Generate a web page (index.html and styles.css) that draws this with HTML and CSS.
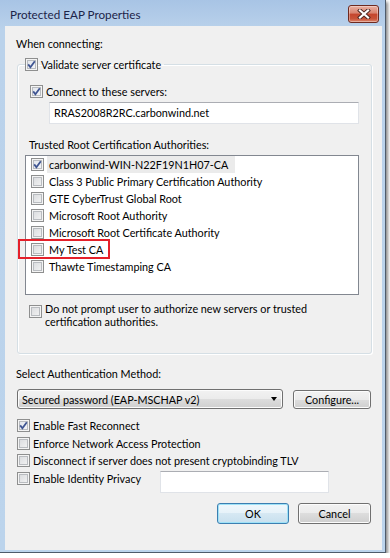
FILE: index.html
```html
<!DOCTYPE html>
<html lang="en">
<head>
    <meta charset="UTF-8">
    <title>Protected EAP Properties</title>
    <link rel="stylesheet" href="styles.css">
</head>
<body>
    <div class="window">
        <div class="titlebar">
            <span class="title">Protected EAP Properties</span>
            <span class="close">
                <svg width="14" height="10" viewBox="0 0 14 10">
                    <path d="M3 1.5 L11 8.5 M11 1.5 L3 8.5" stroke="#4a2520" stroke-width="4" stroke-linecap="square"/>
                    <path d="M3 1.5 L11 8.5 M11 1.5 L3 8.5" stroke="#fff" stroke-width="2.2" stroke-linecap="square"/>
                </svg>
            </span>
        </div>
        <div class="client">
            <p class="label">When connecting:</p>
            <fieldset class="group">
                <legend class="check"><span class="cb checked"></span>Validate server certificate</legend>
                <div class="check servers"><span class="cb checked"></span>Connect to these servers:</div>
                <div class="textbox servers-box">RRAS2008R2RC.carbonwind.net</div>
                <p class="label trusted">Trusted Root Certification Authorities:</p>
                <div class="listbox">
                    <div class="item"><span class="cb checked"></span><span class="name selected">carbonwind-WIN-N22F19N1H07-CA</span></div>
                    <div class="item"><span class="cb"></span><span class="name">Class 3 Public Primary Certification Authority</span></div>
                    <div class="item"><span class="cb"></span><span class="name">GTE CyberTrust Global Root</span></div>
                    <div class="item"><span class="cb"></span><span class="name">Microsoft Root Authority</span></div>
                    <div class="item"><span class="cb"></span><span class="name">Microsoft Root Certificate Authority</span></div>
                    <div class="item marked"><span class="cb"></span><span class="name">My Test CA</span><span class="callout"></span></div>
                    <div class="item"><span class="cb"></span><span class="name">Thawte Timestamping CA</span></div>
                </div>
                <div class="check prompt"><span class="cb"></span><span>Do not prompt user to authorize new servers or trusted certification authorities.</span></div>
            </fieldset>
            <p class="label method">Select Authentication Method:</p>
            <div class="method-row">
                <div class="combo">Secured password (EAP-MSCHAP v2)<span class="arrow"></span></div>
                <div class="button configure">Configure...</div>
            </div>
            <div class="options">
                <div class="check"><span class="cb checked"></span>Enable Fast Reconnect</div>
                <div class="check"><span class="cb"></span>Enforce Network Access Protection</div>
                <div class="check"><span class="cb"></span>Disconnect if server does not present cryptobinding TLV</div>
                <div class="privacy">
                    <div class="check"><span class="cb"></span>Enable Identity Privacy</div>
                    <div class="textbox privacy-box"></div>
                </div>
            </div>
            <div class="actions">
                <div class="button default">OK</div>
                <div class="button">Cancel</div>
            </div>
        </div>
    </div>
    <script>
        // draw the tick inside every checked box
        document.querySelectorAll(".cb.checked").forEach(function (cb) {
            cb.innerHTML = '<svg width="11" height="11" viewBox="0 0 11 11"><path d="M2.2 5.4 L4.4 8.2 L8.8 2.2" fill="none" stroke="#3f5592" stroke-width="1.8"/></svg>';
        });
    </script>
</body>
</html>
```

FILE: styles.css
```css
* {
    margin: 0;
    box-sizing: border-box;
}
body {
    margin: 0;
    background: #fff;
    font-family: Lato, "Noto Sans", sans-serif;
    font-size: 10.8px;
    color: #000;
}

.window {
    width: 386px;
    height: 553px;
    display: flex;
    flex-direction: column;
    background: linear-gradient(#a8c4e5, #bad2eb 30px, #bcd4ec);
    border-right: 1px solid #4e5b6b;
    border-bottom: 1px solid #4e5b6b;
    box-shadow: 2px 2px 3px rgba(0, 0, 0, 0.45);
}
.titlebar {
    height: 26px;
    display: flex;
    justify-content: space-between;
    align-items: flex-start;
    padding: 0 6px 0 10px;
}
.title {
    margin-top: 7px;
    line-height: 15px;
    font-size: 11.7px;
    color: #1c2448;
}
.close {
    width: 31px;
    height: 18px;
    margin-top: 5px;
    display: flex;
    align-items: center;
    justify-content: center;
    border: 1px solid #6e2a20;
    border-radius: 3px;
    background: linear-gradient(#eab0a2, #d8826e 45%, #c4452d 50%, #c85338 80%, #dd8b72);
    box-shadow: inset 0 0 0 1px rgba(255, 255, 255, 0.35);
}

.client {
    flex: 1;
    margin: 0 3px 2px 5px;
    padding: 10px 10px 0 11px;
    background: #f0f0f0;
}
.label {
    line-height: 15px;
}

.check {
    display: flex;
    align-items: center;
    gap: 3px;
    line-height: 15px;
}
.cb {
    flex: none;
    width: 13px;
    height: 13px;
    display: flex;
    align-items: center;
    justify-content: center;
    border: 1px solid #8e8f8f;
    background: linear-gradient(135deg, #d6d8db, #f6f6f6);
    box-shadow: inset 0 0 0 1px #f4f4f4, inset 0 0 0 2px #b9bcc0;
}
.cb.checked {
    background: linear-gradient(135deg, #dfe3ea, #f7f8fa);
}

.group {
    margin: 6px 0 0 1px;
    padding: 0 0 25px 0;
    border: 1px solid #d5dfe5;
    border-radius: 3px;
    box-shadow: inset 1px 1px 0 #fff, 1px 1px 0 #fff;
    min-inline-size: 0;
}
.group legend {
    margin-left: 7px;
    padding: 0 3px 0 0;
}
.servers {
    margin: 12px 0 0 12px;
}
.textbox {
    background: #fff;
    border: 1px solid #e0e3e8;
    border-top-color: #abadb3;
}
.servers-box {
    width: 310px;
    height: 22px;
    margin: 3px 0 0 31px;
    padding-left: 4px;
    line-height: 20px;
}
.trusted {
    margin: 13px 0 0 11px;
}
.listbox {
    width: 334px;
    height: 140px;
    margin: 3px 0 0 7px;
    border: 1px solid #828790;
    background: #fff;
}
.item {
    position: relative;
    height: 17px;
    display: flex;
    align-items: center;
    gap: 3px;
    padding-left: 5px;
}
.name {
    padding: 0 7px 0 2px;
    line-height: 17px;
}
.name.selected {
    background: #ebebeb;
}
.callout {
    position: absolute;
    top: -2px;
    left: -8px;
    width: 92px;
    height: 20px;
    border: 2px solid #e5202a;
}
.prompt {
    margin: 7px 0 0 11px;
    align-items: flex-start;
    line-height: 13px;
}
.prompt .cb {
    margin-top: 3px;
}
.prompt span:last-child {
    width: 275px;
}

.method {
    margin-top: 12px;
}
.method-row {
    display: flex;
    align-items: center;
    justify-content: space-between;
    margin: 8px 1px 0 1px;
}
.button, .combo {
    height: 20px;
    display: flex;
    align-items: center;
    border: 1px solid #707070;
    border-radius: 3px;
    background: linear-gradient(#f2f2f2, #ebebeb 50%, #dddddd 50%, #cfcfcf);
    box-shadow: inset 0 0 0 1px #fcfcfc;
}
.button {
    justify-content: center;
}
.combo {
    width: 266px;
    justify-content: space-between;
    padding: 0 5px 0 4px;
}
.arrow {
    border-top: 4px solid #000;
    border-left: 3.5px solid transparent;
    border-right: 3.5px solid transparent;
}
.configure {
    width: 78px;
    height: 19px;
}

.options {
    display: flex;
    flex-direction: column;
    gap: 2.7px;
    margin: 9px 0 0 1px;
}
.privacy {
    display: flex;
    align-items: flex-start;
}
.privacy .check {
    flex: 0 0 143px;
}
.privacy-box {
    width: 169px;
    height: 22px;
}

.actions {
    display: flex;
    justify-content: flex-end;
    gap: 9px;
    margin: 10px 1px 0 0;
}
.actions .button {
    width: 72px;
    height: 21px;
}
.actions .button + .button {
    width: 73px;
}
.button.default {
    border-color: #3c7fb1;
    background: linear-gradient(#f0f8fc, #e6f2f9 50%, #d6e8f3 50%, #c8e0ee);
    box-shadow: inset 0 0 0 1px #9fe2f7;
}
```
